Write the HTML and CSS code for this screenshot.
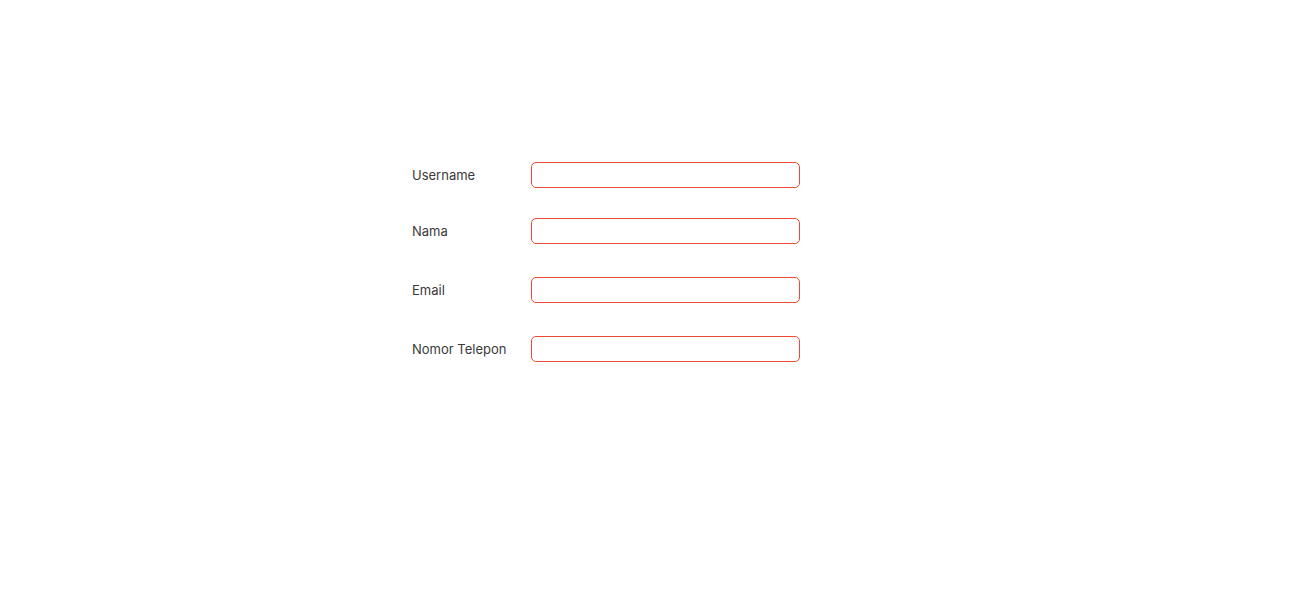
FILE: index.html
```html
<!DOCTYPE html>
<html lang="id">
<head>
    <meta charset="UTF-8">
    <meta name="viewport" content="width=device-width, initial-scale=1.0">
    <title>Profil</title>
    <link rel="stylesheet" href="styles.css">
</head>
<body>
    <form class="profile-form">
        <div class="form-row">
            <label for="username">Username</label>
            <input type="text" id="username">
        </div>
        <div class="form-row">
            <label for="nama">Nama</label>
            <input type="text" id="nama">
        </div>
        <div class="form-row spaced">
            <label for="email">Email</label>
            <input type="email" id="email">
        </div>
        <div class="form-row spaced">
            <label for="telepon">Nomor Telepon</label>
            <input type="text" id="telepon">
        </div>
    </form>
</body>
</html>
```

FILE: styles.css
```css
body {
    margin: 0;
    font-family: "Inter", "Noto Sans", sans-serif;
    color: #333;
    background: #fff;
}
.profile-form {
    padding: 162px 0 0 412px;
    display: flex;
    flex-direction: column;
    gap: 30px;
}
.form-row {
    display: flex;
    align-items: center;
}
.form-row.spaced {
    margin-top: 3px;
}
.form-row label {
    width: 119px;
    font-size: 13px;
    color: #3a3a3a;
}
.form-row input {
    box-sizing: border-box;
    width: 269px;
    height: 26px;
    border: 1px solid #ee4b35;
    border-radius: 5px;
    padding: 0 8px;
    outline: none;
}
```
